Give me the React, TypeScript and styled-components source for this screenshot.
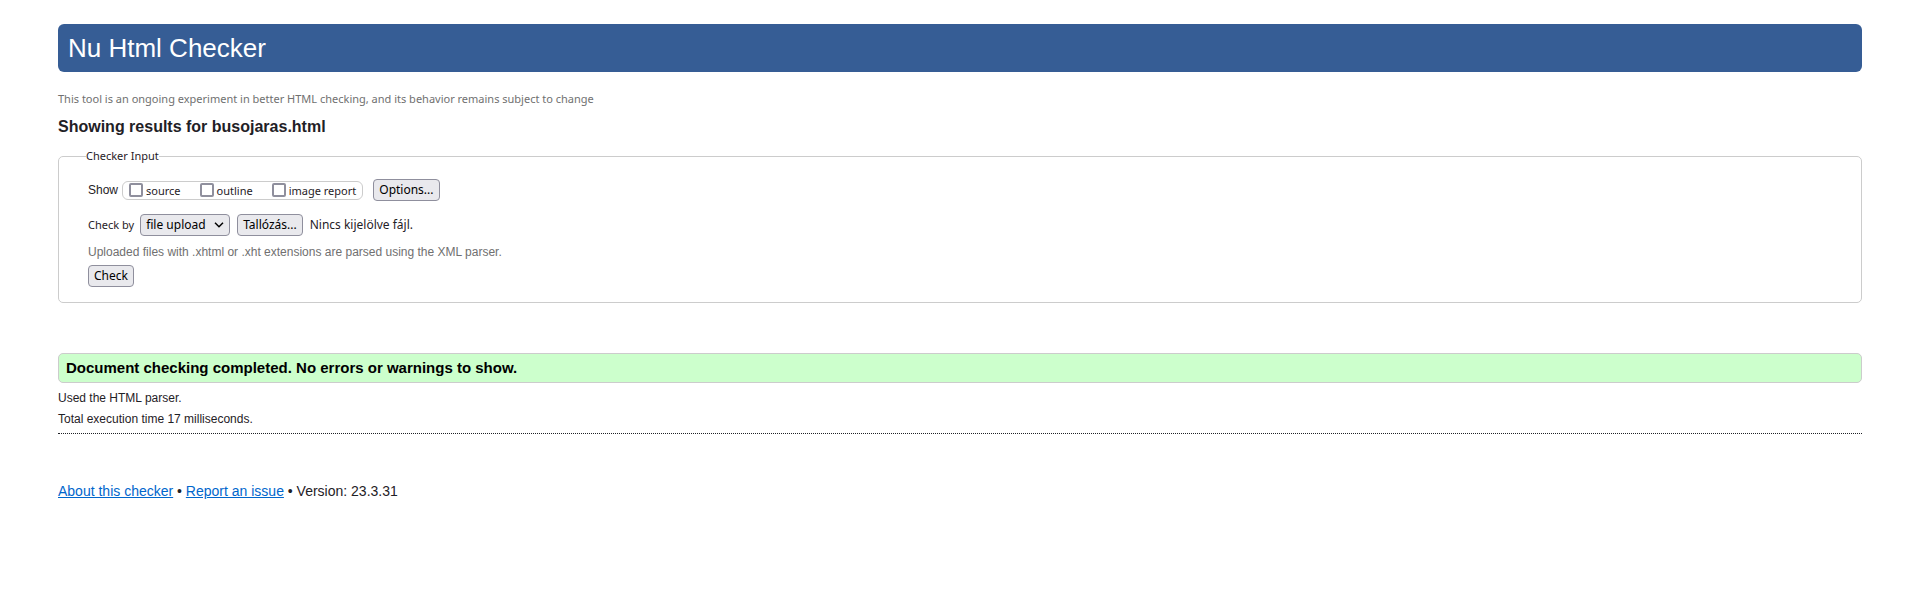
import React, { useRef, useState } from "react";
import styled, { createGlobalStyle, css } from "styled-components";

const sans = '"Liberation Sans", Arial, sans-serif';
const ui = '"Noto Sans", sans-serif';

const GlobalStyle = createGlobalStyle`
  body {
    margin: 0;
    background: #fff;
    color: #1f2126;
    font: 14px/20px ${sans};
  }
`;

const Page = styled.div`
  padding: 24px 58px;
`;

const Banner = styled.header`
  padding: 0 10px;
  border-radius: 6px;
  background: #365d95;
`;

const Title = styled.h1`
  margin: 0;
  color: #fff;
  font-size: 26px;
  font-weight: 400;
  line-height: 48px;
`;

const Tagline = styled.p`
  margin: 17px 0 8px;
  color: #707070;
  font: 11px/20px ${ui};
`;

const ResultsHeading = styled.h2`
  margin: 0 0 9px;
  font-size: 16px;
  line-height: 20px;
`;

const InputPanel = styled.fieldset`
  margin: 0;
  padding: 13px 29px 15px;
  border: 1px solid #ccc;
  border-radius: 5px;
  font-size: 12px;
`;

const PanelLegend = styled.legend`
  margin-left: -2px;
  padding: 0;
  font: 11px/20px ${ui};
`;

const Row = styled.div`
  display: flex;
  align-items: center;
`;

const SourceRow = styled(Row)`
  margin: 13px 0 6px;
`;

const ShowGroup = styled.div`
  display: flex;
  align-items: center;
  gap: 19px;
  margin: 0 10px 0 4px;
  padding: 0 6px;
  border: 1px solid #ccc;
  border-radius: 6px;
`;

const Option = styled.label`
  display: flex;
  align-items: center;
  gap: 3px;
  font: 11px/17px ${ui};
`;

const Checkbox = styled.input`
  appearance: none;
  box-sizing: border-box;
  width: 14px;
  height: 14px;
  margin: 0;
  border: 2px solid #8f8f9d;
  border-radius: 2px;
  background: #fff;

  &:checked {
    border-color: #0060df;
    background: #0060df;
  }
`;

const control = css`
  box-sizing: border-box;
  height: 22px;
  margin: 0;
  border: 1px solid #8f8f9d;
  border-radius: 4px;
  background: #e9e9ed;
  color: #000;
  font: 12px/20px ${ui};
`;

const Button = styled.button`
  ${control}
  padding: 0 5px;
`;

const SelectBox = styled.div`
  display: grid;
  align-items: center;
  margin: 0 7px 0 6px;

  > * {
    grid-area: 1 / 1;
  }

  svg {
    justify-self: end;
    margin-right: 6px;
    pointer-events: none;
  }
`;

const Select = styled.select`
  ${control}
  appearance: none;
  padding: 0 23px 0 5px;
`;

const SmallLabel = styled.label`
  font: 11px/20px ${ui};
`;

const FileName = styled.output`
  margin-left: 7px;
  font: 12px/20px ${ui};
`;

const Hint = styled.p`
  margin: 5px 0 3px;
  color: #707070;
  line-height: 20px;
`;

const Success = styled.p`
  margin: 50px 0 5px;
  padding: 4px 7px;
  border: 1px solid #ccc;
  border-radius: 5px;
  background: #cfc;
  color: #000;
  font-size: 15px;
  font-weight: 700;
`;

const Detail = styled.p`
  margin: 0;
  font-size: 12px;
  line-height: 21px;
`;

const Divider = styled.hr`
  margin: 3px 0 47px;
  border: 0;
  border-top: 1px dotted #1f2126;
`;

const Footer = styled.footer`
  font-size: 14px;

  a {
    color: #0066cc;
  }
`;

const showOptions = ["source", "outline", "image report"];

export default function App() {
  const fileInput = useRef<HTMLInputElement>(null);
  const [fileName, setFileName] = useState("Nincs kijelölve fájl.");

  return (
    <Page>
      <GlobalStyle />
      <Banner>
        <Title>Nu Html Checker</Title>
      </Banner>
      <main>
        <Tagline>
          This tool is an ongoing experiment in better HTML checking, and its behavior remains subject to change
        </Tagline>
        <ResultsHeading>Showing results for busojaras.html</ResultsHeading>
        <form onSubmit={(e) => e.preventDefault()}>
          <InputPanel>
            <PanelLegend>Checker Input</PanelLegend>
            <Row>
              <span id="show-label">Show</span>
              <ShowGroup role="group" aria-labelledby="show-label">
                {showOptions.map((name) => (
                  <Option key={name}>
                    <Checkbox type="checkbox" />
                    {name}
                  </Option>
                ))}
              </ShowGroup>
              <Button type="button">Options...</Button>
            </Row>
            <SourceRow>
              <SmallLabel htmlFor="method">Check by</SmallLabel>
              <SelectBox>
                <Select id="method" defaultValue="file">
                  <option value="address">address</option>
                  <option value="file">file upload</option>
                  <option value="text">text input</option>
                </Select>
                <svg width="10" height="6" viewBox="0 0 10 6" aria-hidden="true">
                  <path d="M1 0.8 L5 4.8 L9 0.8" fill="none" stroke="#000" strokeWidth="1.5" />
                </svg>
              </SelectBox>
              <Button type="button" onClick={() => fileInput.current?.click()}>
                Tallózás...
              </Button>
              <input
                ref={fileInput}
                type="file"
                hidden
                aria-label="File"
                onChange={(e) => setFileName(e.target.files?.[0]?.name ?? fileName)}
              />
              <FileName>{fileName}</FileName>
            </SourceRow>
            <Hint>Uploaded files with .xhtml or .xht extensions are parsed using the XML parser.</Hint>
            <Row>
              <Button type="submit">Check</Button>
            </Row>
          </InputPanel>
        </form>
        <Success>Document checking completed. No errors or warnings to show.</Success>
        <Detail>Used the HTML parser.</Detail>
        <Detail>Total execution time 17 milliseconds.</Detail>
        <Divider />
      </main>
      <Footer>
        <a href="#about">About this checker</a> • <a href="#issues">Report an issue</a> • Version: 23.3.31
      </Footer>
    </Page>
  );
}
